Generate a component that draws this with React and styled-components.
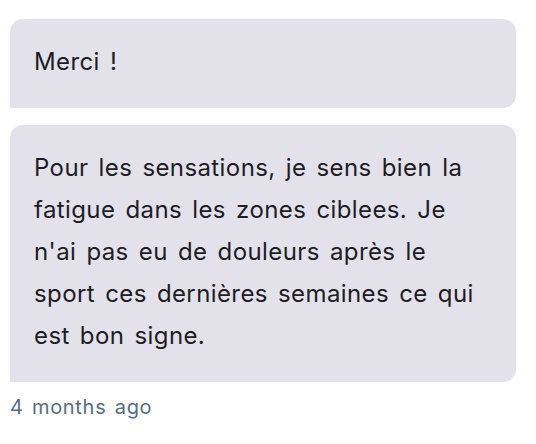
import React from 'react';
import styled, { createGlobalStyle } from 'styled-components';

const GlobalStyle = createGlobalStyle`
  body {
    margin: 0;
    background: #ffffff;
    font-family: Inter, "Open Sans", sans-serif;
  }
`;

const Thread = styled.div`
  display: flex;
  flex-direction: column;
  gap: 17px;
  width: 506px;
  padding: 19px 0 0 10px;
`;

const Bubble = styled.div`
  background: #e3e2eb;
  color: #1d1d22;
  border-radius: 13px 13px 13px 0;
  padding: 22px 24px 25px;
  font-size: 24px;
  line-height: 42px;
  letter-spacing: 0.4px;
  word-spacing: 3px;
`;

const Meta = styled.div`
  margin-top: 13px;
  color: #566d88;
  font-size: 20px;
  line-height: 24px;
  letter-spacing: 0.7px;
  word-spacing: 2px;
`;

export default function App() {
  return (
    <>
      <GlobalStyle />
      <Thread>
        <Bubble>Merci !</Bubble>
        <div>
          <Bubble>
            Pour les sensations, je sens bien la fatigue dans les zones ciblees. Je n'ai pas eu de douleurs après le sport ces dernières semaines ce qui est bon signe.
          </Bubble>
          <Meta>4 months ago</Meta>
        </div>
      </Thread>
    </>
  );
}
